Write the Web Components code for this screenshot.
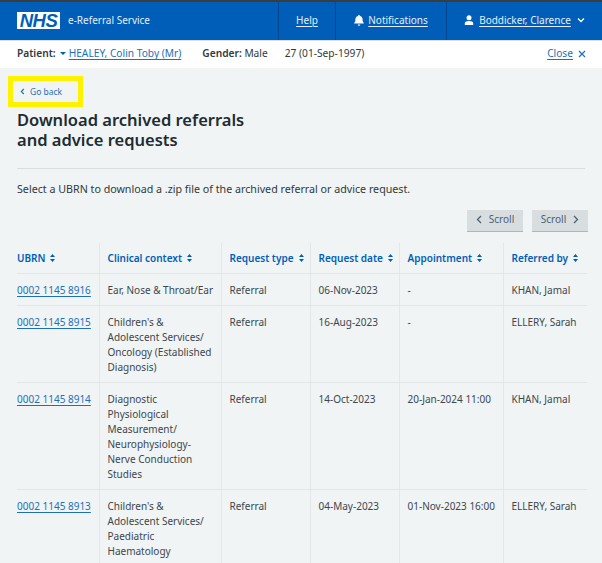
<!DOCTYPE html>
<html lang="en">
<head>
<meta charset="utf-8">
<title>Download archived referrals</title>
<style>
  html, body { margin: 0; height: 563px; overflow: hidden; }
  body { background: #f0f4f5; color: #2f3a40; font: 10px/15px "Noto Sans", sans-serif; }
</style>
</head>
<body>
<ers-header></ers-header>
<patient-bar></patient-bar>
<back-link>Go back</back-link>
<page-title>Download archived referrals<br>and advice requests</page-title>
<ers-intro>Select a UBRN to download a .zip file of the archived referral or advice request.</ers-intro>
<scroll-buttons></scroll-buttons>
<referral-table></referral-table>

<script>
const chevron = (points) => `<svg width="7" height="9" viewBox="0 0 7 9" fill="none" stroke="currentColor" stroke-width="1.3"><polyline points="${points}"/></svg>`;

class ErsHeader extends HTMLElement {
  constructor() {
    super();
    this.attachShadow({ mode: "open" }).innerHTML = `<style>
      :host { display: flex; height: 38px; border-top: 2px solid #3a3d40; background: #005eb8; color: #e4eef8; font-size: 10px; }
      .brand { flex: 1; display: flex; align-items: center; gap: 8px; padding: 0 0 2px 17px; }
      .logo { width: 43px; height: 17px; background: #fff; color: #005eb8; display: flex; align-items: center; justify-content: center; font: italic 700 18.5px/17px "Liberation Sans", sans-serif; letter-spacing: -.5px; }
      .item { display: flex; align-items: center; justify-content: center; gap: 4px; padding-bottom: 2px; border-left: 1px solid #00478f; box-sizing: border-box; }
      .help { width: 57px; }
      .notes { width: 111px; }
      .user { width: 156px; gap: 5px; }
      u { text-underline-offset: 2px; }
      svg { display: block; }
    </style>
    <div class="brand"><span class="logo">NHS</span><span>e-Referral Service</span></div>
    <div class="item help"><u>Help</u></div>
    <div class="item notes">
      <svg width="10" height="11" viewBox="0 0 10 11" fill="#fff"><path d="M5 0a1 1 0 0 1 1 1c2 .5 2.6 2 2.6 3.6 0 2 .5 2.7 1.2 3.4v.6H.2V8C.9 7.300 1.400 6.600 1.400 4.600 1.400 3 2 1.500 4 1a1 1 0 0 1 1-1zM3.700 9.500h2.600A1.300 1.300 0 0 1 3.700 9.500z"/></svg>
      <u>Notifications</u>
    </div>
    <div class="item user">
      <svg width="10" height="10" viewBox="0 0 10 10" fill="#fff"><circle cx="5" cy="2.800" r="2.500"/><path d="M.8 10V8.400C.8 6.800 2.500 6 5 6s4.200.8 4.200 2.400V10z"/></svg>
      <u>Boddicker, Clarence</u>
      <svg style="margin-left:1px" width="8" height="6" viewBox="0 0 8 6" fill="none" stroke="#fff" stroke-width="1.300"><polyline points="1,1.500 4,4.500 7,1.500"/></svg>
    </div>`;
  }
}

class PatientBar extends HTMLElement {
  constructor() {
    super();
    this.attachShadow({ mode: "open" }).innerHTML = `<style>
      :host { display: flex; align-items: center; height: 28px; padding: 0 16px 2px 17px; background: #fff; border-top: 1px solid #d8dde0; box-sizing: border-box; font-size: 10.2px; }
      b { font-weight: 600; }
      a { color: #1d70b8; text-decoration: underline; text-underline-offset: 2px; }
      .caret { width: 0; height: 0; margin: 0 3px 0 4px; border: 3px solid transparent; border-top: 3.500px solid #005eb8; border-bottom: 0; }
      .gender { margin-left: 21px; }
      .age { margin-left: 17px; }
      .close { margin-left: auto; display: flex; align-items: center; gap: 5px; }
      svg { display: block; }
    </style>
    <b>Patient:</b><span class="caret"></span><a>HEALEY, Colin Toby (Mr)</a>
    <span class="gender"><b>Gender:</b> Male</span>
    <span class="age">27 (01-Sep-1997)</span>
    <span class="close"><a>Close</a>
      <svg width="8" height="8" viewBox="0 0 8 8" fill="none" stroke="#1d70b8" stroke-width="1.200"><path d="M1 1l6 6M7 1L1 7"/></svg>
    </span>`;
  }
}

class BackLink extends HTMLElement {
  constructor() {
    super();
    this.attachShadow({ mode: "open" }).innerHTML = `<style>
      :host { display: flex; align-items: center; gap: 5px; box-sizing: border-box; width: 75px; height: 31px; margin: 8px 0 0 8px; padding-left: 7px; border: 5px solid #fff200; color: #1d70b8; font-size: 8.500px; }
      svg { display: block; }
    </style>
    <svg width="5" height="7" viewBox="0 0 5 7" fill="none" stroke="currentColor" stroke-width="1.100"><polyline points="3.800,1 1.300,3.500 3.800,6"/></svg>
    <slot></slot>`;
  }
}

class PageTitle extends HTMLElement {
  constructor() {
    super();
    this.attachShadow({ mode: "open" }).innerHTML = `<style>
      :host { display: block; margin: 3px 17px 0; padding-bottom: 18px; border-bottom: 1px solid #d8dde0; color: #212b32; font-size: 16.500px; line-height: 20px; font-weight: 600; }
    </style><slot></slot>`;
  }
}

class ErsIntro extends HTMLElement {
  constructor() {
    super();
    this.attachShadow({ mode: "open" }).innerHTML = `<style>
      :host { display: block; margin: 13px 17px 0; font-size: 10.700px; }
    </style><slot></slot>`;
  }
}

class ScrollButtons extends HTMLElement {
  constructor() {
    super();
    this.attachShadow({ mode: "open" }).innerHTML = `<style>
      :host { display: flex; justify-content: flex-end; gap: 9px; margin: 13px 14px 0 0; }
      button { display: flex; align-items: center; justify-content: center; gap: 6px; width: 56px; height: 22px; padding: 0 0 2px; border: 0; border-bottom: 1px solid #aeb7bd; background: #d8dde0; color: #4c6272; font: inherit; font-size: 10px; }
      svg { display: block; }
    </style>
    <button>${chevron("5,1 1.500,4.500 5,8")}<span>Scroll</span></button>
    <button><span>Scroll</span>${chevron("2,1 5.500,4.500 2,8")}</button>`;
  }
}

const columns = [
  ["UBRN", 82], ["Clinical context", 122], ["Request type", 89],
  ["Request date", 89], ["Appointment", 104], ["Referred by", 84],
];
const rows = [
  ["0002 1145 8916", "Ear, Nose & Throat/Ear", "Referral", "06-Nov-2023", "-", "KHAN, Jamal"],
  ["0002 1145 8915", "Children's &<br>Adolescent Services/<br>Oncology (Established<br>Diagnosis)", "Referral", "16-Aug-2023", "-", "ELLERY, Sarah"],
  ["0002 1145 8914", "Diagnostic<br>Physiological<br>Measurement/<br>Neurophysiology-<br>Nerve Conduction<br>Studies", "Referral", "14-Oct-2023", "20-Jan-2024 11:00", "KHAN, Jamal"],
  ["0002 1145 8913", "Children's &<br>Adolescent Services/<br>Paediatric<br>Haematology", "Referral", "04-May-2023", "01-Nov-2023 16:00", "ELLERY, Sarah"],
];

class ReferralTable extends HTMLElement {
  constructor() {
    super();
    const sort = `<svg width="5" height="8" viewBox="0 0 5 8" fill="currentColor"><path d="M2.500 0L5 3H0zM2.500 8L0 5h5z"/></svg>`;
    const head = columns.map(([name]) => `<th><span>${name}${sort}</span></th>`).join("");
    const body = rows.map(([ubrn, ...cells]) =>
      `<tr><td><a>${ubrn}</a></td>${cells.map((c) => `<td>${c}</td>`).join("")}</tr>`).join("");
    this.attachShadow({ mode: "open" }).innerHTML = `<style>
      :host { display: block; margin: 11px 15px 0 17px; }
      table { width: 570px; table-layout: fixed; border-collapse: collapse; font-size: 10px; line-height: 15px; }
      th { height: 30px; padding: 0 0 0 8px; text-align: left; color: #005eb8; font-weight: 600; border-bottom: 1px solid #e3e7ea; }
      th span { display: flex; align-items: center; gap: 5px; white-space: nowrap; }
      td { padding: 9px 0 7px 8px; vertical-align: top; border-bottom: 1px solid #e3e7ea; white-space: nowrap; color: #3d474d; }
      th + th, td + td { border-left: 1px solid #e3e7ea; }
      th:first-child, td:first-child { padding-left: 0; }
      a { color: #1d70b8; text-decoration: underline; text-underline-offset: 2px; }
      svg { display: block; }
    </style>
    <table>
      <colgroup>${columns.map(([, w]) => `<col style="width:${w}px">`).join("")}</colgroup>
      <thead><tr>${head}</tr></thead>
      <tbody>${body}</tbody>
    </table>`;
  }
}

customElements.define("ers-header", ErsHeader);
customElements.define("patient-bar", PatientBar);
customElements.define("back-link", BackLink);
customElements.define("page-title", PageTitle);
customElements.define("ers-intro", ErsIntro);
customElements.define("scroll-buttons", ScrollButtons);
customElements.define("referral-table", ReferralTable);
</script>
</body>
</html>
